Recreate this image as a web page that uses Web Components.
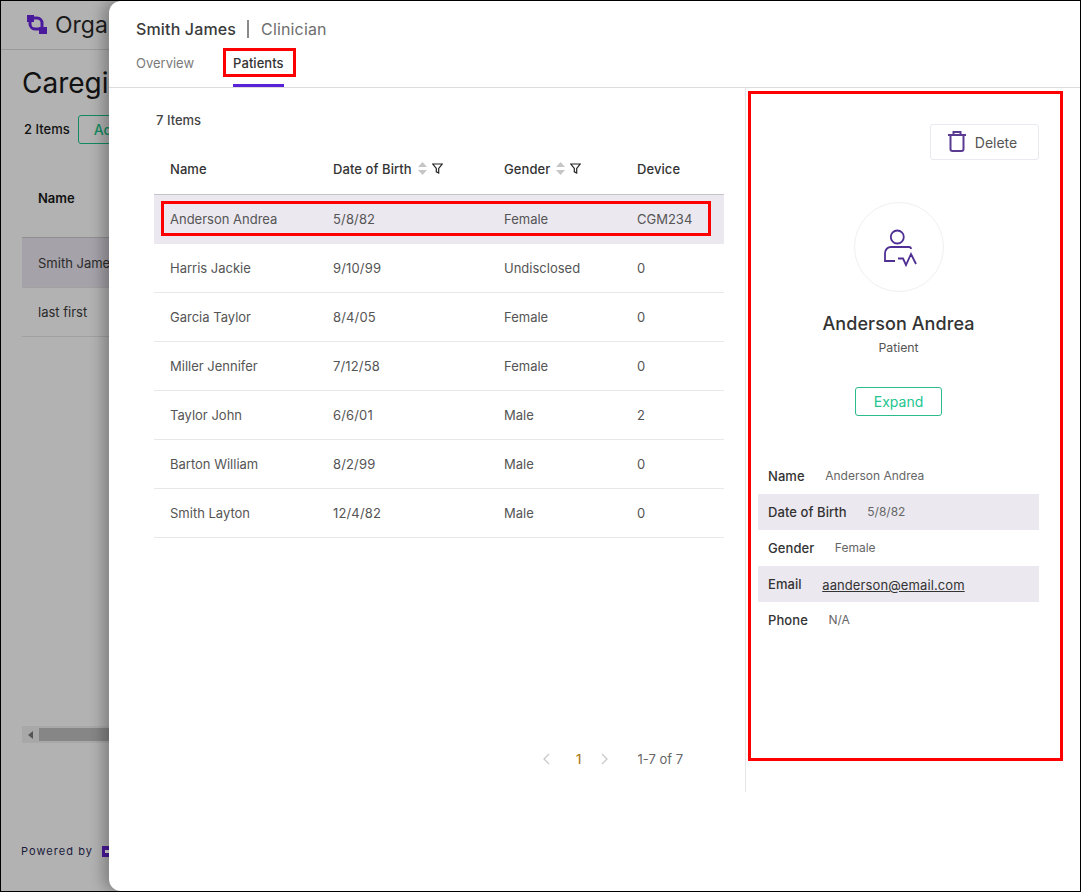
<!DOCTYPE html>
<html lang="en"><head><meta charset="utf-8"><title>Patients</title>
<style>html,body{margin:0;padding:0;background:#000}body{font-family:Inter,"Liberation Sans",sans-serif}</style></head>
<body>
<app-shell></app-shell>
<template id="t-shell"><style>
:host{display:block;position:relative;width:1081px;height:892px;box-sizing:border-box;border:1px solid #000;overflow:hidden;background:#b2b2b2;font-family:Inter,"Liberation Sans",sans-serif}
</style><back-page></back-page><patient-drawer></patient-drawer></template>

<template id="t-back"><style>
:host{display:flex;flex-direction:column;height:100%;color:#111}
.top{height:49px;box-sizing:border-box;border-bottom:1px solid #9a9a9a;display:flex;align-items:center;gap:7px;padding:0 0 1px 26px;font-size:23px;color:#1c1c1c}
.top svg{display:block}
h1{font-size:28px;font-weight:400;margin:15px 0 0 21px;line-height:36px;color:#111;white-space:nowrap}
.tools{display:flex;align-items:center;gap:8px;margin:13px 0 0 23px;font-size:13px;font-weight:500;height:30px}
.add{border:1px solid #128a60;border-radius:3px;height:29px;width:60px;box-sizing:border-box;padding:0 15px;display:flex;align-items:center;font-size:14px;color:#128a60;white-space:nowrap}
.tbl{margin:26px 0 0 21px;width:300px;font-size:13px}
.h{padding:19px 0 0 16px;box-sizing:border-box;font-weight:600;border-bottom:1px solid #8f8f8f;line-height:18px;height:68px}
.r{height:49px;display:flex;align-items:center;padding-left:16px;border-bottom:1px solid #a0a0a0;box-sizing:border-box;color:#2a2a2a}
.r.on{background:#a5a2a9;height:50px}
.bar{margin:389px 0 0 21px;height:17px;width:300px;background:#a8a8a8;display:flex;align-items:center}
.bar i{width:17px;display:flex;justify-content:center}
.bar b{width:200px;height:13px;background:#868686}
.pw{margin:101px 0 0 20px;font-size:11px;letter-spacing:1.05px;display:flex;align-items:center;gap:9px;color:#1a1a3a}
</style>
<div class="top"><svg width="21" height="20" viewBox="0 0 21 20"><path fill="#4a1a9c" d="M0 0h7v7H0zM12 12h8v7h-8z"/><path fill="none" stroke="#4a1a9c" stroke-width="3" d="M7 3h3a5 5 0 0 1 5 5v4M3 7v2a5 5 0 0 0 5 5h4"/></svg><span>Organ</span></div>
<h1>Caregi</h1>
<div class="tools"><span>2 Items</span><span class="add">Add</span></div>
<div class="tbl"><div class="h">Name</div><div class="r on">Smith James</div><div class="r">last first</div></div>
<div class="bar"><i><svg width="5" height="8"><path d="M5 0v8L0 4z" fill="#555"/></svg></i><b></b></div>
<div class="pw"><span>Powered by</span><svg width="11" height="11"><path fill="#4a1a9c" d="M0 0h11v11H0z"/><path fill="#ddd" d="M3 4h4v3H3z"/></svg></div>
</template>

<template id="t-drawer"><style>
:host{position:absolute;left:108px;top:0;right:0;bottom:0;background:#fff;border-radius:12px 0 0 12px;box-shadow:-6px 0 14px rgba(0,0,0,.28);display:flex;flex-direction:column;color:#333}
header{padding:16px 0 0 27px;height:87px;box-sizing:border-box;border-bottom:1px solid #dcdcdc;display:flex;flex-direction:column}
.title{display:flex;align-items:center;font-size:16px;line-height:24px;height:24px;letter-spacing:.15px}
.title b{font-weight:500;color:#3a3a3a}
.title i{width:2px;height:18px;background:#8a8a8a;margin:0 12px 0 11px}
.title span{color:#6e6e6e}
.tabs{display:flex;gap:39px;margin-top:10px;font-size:13px;height:36px}
.tab{color:#7a7a7a;line-height:24px;box-sizing:border-box;height:36px;position:relative}
.tab.on{color:#333;font-weight:500;border-bottom:3px solid #5a22d8;letter-spacing:.05px}
main{display:flex;height:704px}
.left{width:637px;box-sizing:border-box;border-right:1px solid #e6e6e6;padding:23px 0 0 45px;display:flex;flex-direction:column;position:relative}
.count{font-size:13px;font-weight:500;color:#444;line-height:18px;margin-left:2px}
.pager{margin-top:auto;margin-bottom:24px;display:flex;align-items:center;font-size:13px;color:#666;height:18px;margin-left:387px}
.pager .n{color:#b07a1a;font-weight:500;margin:0 17px 0 23px}
.pager .t{margin-left:27px}
red-mark.a{left:114px;top:47px;width:73px;height:29px}
red-mark.b{left:52px;top:200px;width:550px;height:35px}
red-mark.c{left:639px;top:90px;width:315px;height:670px}
</style>
<header><div class="title"><b>Smith James</b><i></i><span>Clinician</span></div>
<div class="tabs"><div class="tab">Overview</div><div class="tab on">Patients</div></div></header>
<main><section class="left"><div class="count">7 Items</div><patient-table></patient-table>
<div class="pager"><svg width="12" height="12" viewBox="0 0 12 12"><path d="M8 1 3 6l5 5" fill="none" stroke="#c9c9c9" stroke-width="1.3"/></svg><span class="n">1</span><svg width="12" height="12" viewBox="0 0 12 12"><path d="m4 1 5 5-5 5" fill="none" stroke="#c9c9c9" stroke-width="1.3"/></svg><span class="t">1-7 of 7</span></div></section>
<patient-detail></patient-detail></main>
<red-mark class="a"></red-mark><red-mark class="b"></red-mark><red-mark class="c"></red-mark>
</template>

<template id="t-mark"><style>:host{position:absolute;box-sizing:border-box;border:3px solid #f00;pointer-events:none}</style></template>

<template id="t-table"><style>
:host{display:block;width:570px;margin-top:16px;font-size:13px;color:#555}
.row{display:grid;grid-template-columns:163px 171px 133px 1fr;padding-left:16px;height:49px;align-items:center;border-bottom:1px solid #e8e8e8;box-sizing:border-box}
.row span:nth-child(2){letter-spacing:.15px}
.head{height:50px;color:#333;font-weight:500;border-bottom:1px solid #c4c4c8;padding-bottom:2px;letter-spacing:.08px}
.head span{display:flex;align-items:center}
.head span:nth-child(2){letter-spacing:.08px}
.on{background:#ebe8f0;border-bottom:0;padding-bottom:2px}
svg{display:block;margin-left:6px}
svg+svg{margin-left:5px}
</style><div id="rows"></div></template>

<template id="t-detail"><style>
:host{display:flex;flex-direction:column;align-items:center;flex:1;padding:36px 41px 0 12px;box-sizing:border-box;color:#333}
.del{align-self:flex-end;width:109px;height:36px;box-sizing:border-box;border:1px solid #ebe8f0;border-radius:3px;display:flex;align-items:center;justify-content:center;gap:8px;padding-right:5px;font-size:14px;color:#555}
.del svg{margin-top:-2px}
.av{width:90px;height:90px;box-sizing:border-box;border:1px solid #f0f0f2;border-radius:50%;margin-top:42px;display:flex;align-items:center;justify-content:center}
h2{font-size:18px;font-weight:500;margin:20px 0 0;line-height:24px;color:#333;letter-spacing:.1px}
p{font-size:12.3px;margin:4px 0 0;line-height:16px;color:#555}
.exp{margin-top:31px;width:87px;height:29px;box-sizing:border-box;border:1px solid #2dbb8e;border-radius:3px;color:#22c58f;font-size:14px;font-weight:400;display:flex;align-items:center;justify-content:center}
dl{align-self:stretch;margin:42px 0 0}
.d{height:36px;display:flex;align-items:center;padding-left:10px;gap:20.5px;font-size:12px;color:#666}
.d:nth-child(even){background:#ebe8f0}
.d b{font-size:13px;font-weight:500;color:#333;letter-spacing:.08px}
.d span{position:relative;top:-1px}
.d a{font-size:13px;color:#333;text-decoration:underline;letter-spacing:.1px;position:relative;top:1px}
</style>
<div class="del"><svg width="20" height="22" viewBox="0 0 20 22" fill="none" stroke="#5b3a91" stroke-width="2"><path d="M1 5h18M3.500 5v14a2 2 0 0 0 2 2h9a2 2 0 0 0 2-2V5M6.500 5V2h7V5"/></svg><span>Delete</span></div>
<div class="av"><svg width="40" height="44" viewBox="0 0 40 44" fill="none" stroke="#4f2f94" stroke-width="1.8"><circle cx="18.300" cy="12" r="6.500"/><path d="M32 24a2 2 0 0 0-2-2H12a6 6 0 0 0-6 6v8h10M19 33.500h5l3 6.500 5-11 5 10"/></svg></div>
<h2>Anderson Andrea</h2><p>Patient</p>
<div class="exp">Expand</div>
<dl><div class="d"><b>Name</b><span>Anderson Andrea</span></div>
<div class="d"><b>Date of Birth</b><span>5/8/82</span></div>
<div class="d"><b>Gender</b><span>Female</span></div>
<div class="d"><b>Email</b><a>aanderson@email.com</a></div>
<div class="d"><b>Phone</b><span>N/A</span></div></dl>
</template>

<script>
const mount=(el,id)=>{el.attachShadow({mode:'open'}).appendChild(document.getElementById(id).content.cloneNode(true));return el.shadowRoot};
const def=(n,id,after)=>customElements.define(n,class extends HTMLElement{constructor(){super();const r=mount(this,id);after&&after(r)}});
const sort='<svg width="9" height="15" viewBox="0 0 9 15"><path fill="#c6c6c6" d="M4.500 1 9 6H0zM4.500 14 0 9h9z"/></svg>';
const filt='<svg width="11" height="11" viewBox="0 0 11 11"><path d="M.8 1h9.400L6.700 5.500V10L4.300 8.800V5.500z" fill="none" stroke="#222" stroke-width="1.200"/></svg>';
const data=[["Anderson Andrea","5/8/82","Female","CGM234"],["Harris Jackie","9/10/99","Undisclosed","0"],["Garcia Taylor","8/4/05","Female","0"],["Miller Jennifer","7/12/58","Female","0"],["Taylor John","6/6/01","Male","2"],["Barton William","8/2/99","Male","0"],["Smith Layton","12/4/82","Male","0"]];
def('red-mark','t-mark');
def('back-page','t-back');
def('patient-drawer','t-drawer');
def('patient-detail','t-detail');
def('patient-table','t-table',r=>{
 r.getElementById('rows').innerHTML=`<div class="row head"><span>Name</span><span>Date of Birth${sort}${filt}</span><span>Gender${sort}${filt}</span><span>Device</span></div>`+data.map((d,i)=>`<div class="row${i?'':' on'}">${d.map(c=>`<span>${c}</span>`).join('')}</div>`).join('');
});
def('app-shell','t-shell');
</script>
</body></html>
